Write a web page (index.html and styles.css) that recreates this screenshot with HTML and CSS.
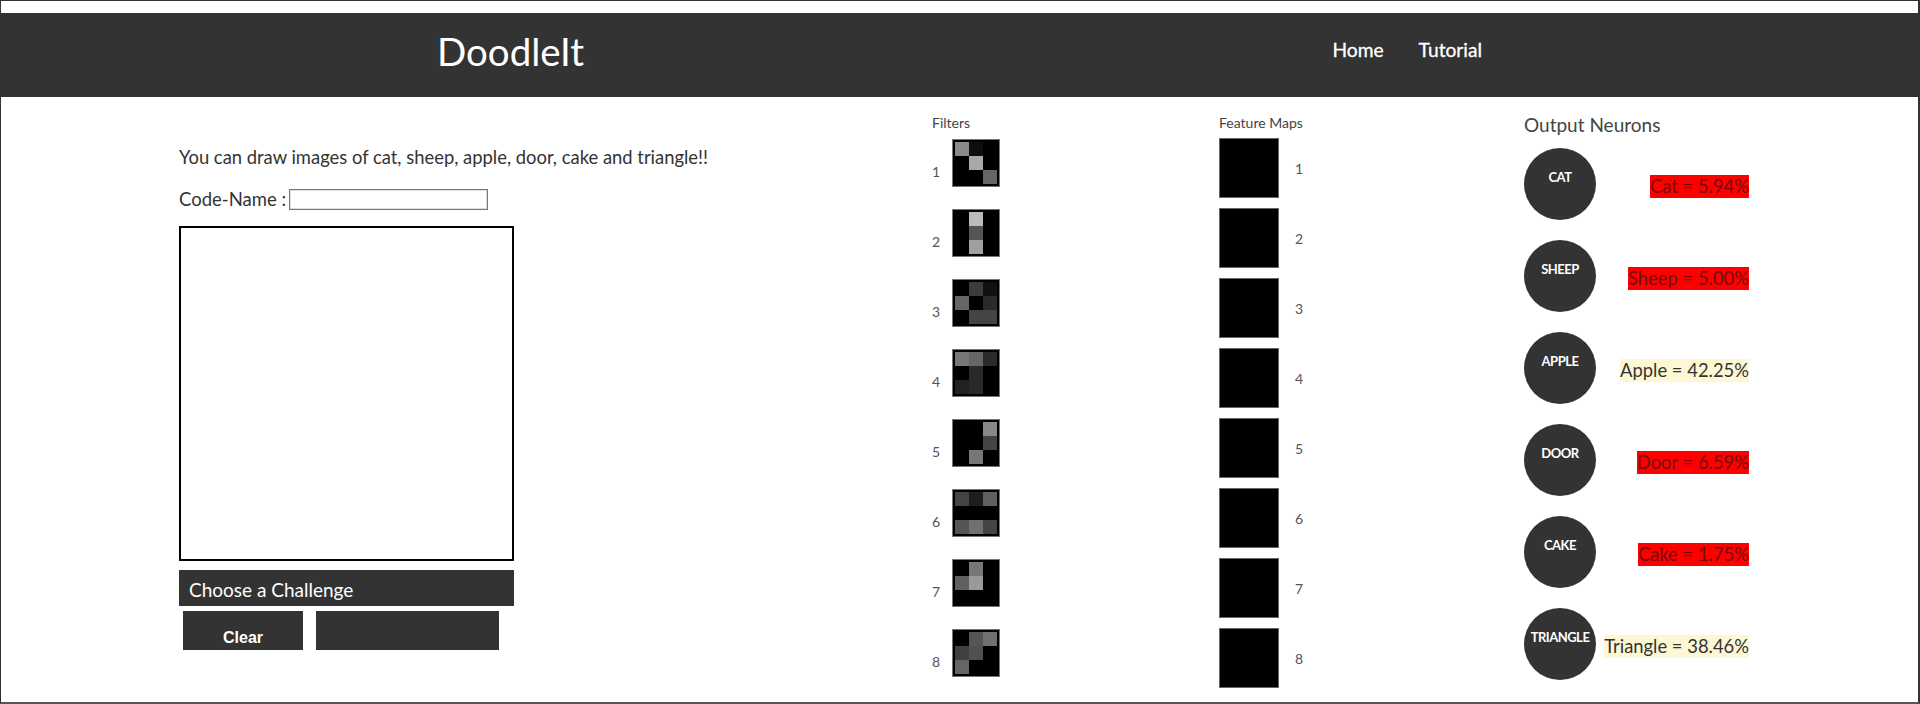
FILE: index.html
```html
<!DOCTYPE html>
<html>
<head>
<meta charset="utf-8">
<title>DoodleIt</title>
<link rel="stylesheet" href="styles.css">
</head>
<body>
<div class="frame">
  <header class="topbar">
    <div class="brand">DoodleIt</div>
    <nav class="nav">
      <a class="nav-link" href="#">Home</a>
      <a class="nav-link" href="#">Tutorial</a>
    </nav>
  </header>
  <main class="main">
    <section class="draw-col">
      <p class="intro">You can draw images of cat, sheep, apple, door, cake and triangle!!</p>
      <div class="codename"><span>Code-Name :</span><input class="codename-input" type="text"></div>
      <div class="canvas"></div>
      <div class="challenge">Choose a Challenge</div>
      <div class="buttons">
        <button class="btn btn-clear">Clear</button>
        <button class="btn btn-wide"></button>
      </div>
    </section>

    <section class="filters-col">
      <div class="col-title">Filters</div>
      <div class="filter-list">
        <div class="filter-row"><span class="num">1</span><div class="filter">
          <i style="background:#8a8a8a"></i><i style="background:#0e0e0e"></i><i></i>
          <i></i><i style="background:#a8a8a8"></i><i></i>
          <i></i><i></i><i style="background:#666"></i></div></div>
        <div class="filter-row"><span class="num">2</span><div class="filter">
          <i></i><i style="background:#bbb"></i><i></i>
          <i></i><i style="background:#555"></i><i></i>
          <i></i><i style="background:#a0a0a0"></i><i></i></div></div>
        <div class="filter-row"><span class="num">3</span><div class="filter">
          <i></i><i style="background:#3c3c3c"></i><i style="background:#111"></i>
          <i style="background:#666"></i><i></i><i style="background:#2a2a2a"></i>
          <i></i><i style="background:#444"></i><i style="background:#444"></i></div></div>
        <div class="filter-row"><span class="num">4</span><div class="filter">
          <i style="background:#777"></i><i style="background:#666"></i><i style="background:#2a2a2a"></i>
          <i></i><i style="background:#2a2a2a"></i><i></i>
          <i style="background:#222"></i><i style="background:#2a2a2a"></i><i></i></div></div>
        <div class="filter-row"><span class="num">5</span><div class="filter">
          <i></i><i></i><i style="background:#888"></i>
          <i></i><i></i><i style="background:#444"></i>
          <i></i><i style="background:#777"></i><i></i></div></div>
        <div class="filter-row"><span class="num">6</span><div class="filter">
          <i style="background:#444"></i><i style="background:#1e1e1e"></i><i style="background:#606060"></i>
          <i></i><i></i><i></i>
          <i style="background:#555"></i><i style="background:#707070"></i><i style="background:#444"></i></div></div>
        <div class="filter-row"><span class="num">7</span><div class="filter">
          <i></i><i style="background:#777"></i><i></i>
          <i style="background:#606060"></i><i style="background:#9a9a9a"></i><i></i>
          <i></i><i></i><i></i></div></div>
        <div class="filter-row"><span class="num">8</span><div class="filter">
          <i></i><i style="background:#555"></i><i style="background:#707070"></i>
          <i style="background:#404040"></i><i style="background:#505050"></i><i></i>
          <i style="background:#666"></i><i></i><i></i></div></div>
      </div>
    </section>

    <section class="maps-col">
      <div class="col-title">Feature Maps</div>
      <div class="map-list">
        <div class="map-row"><div class="map"></div><span class="num">1</span></div>
        <div class="map-row"><div class="map"></div><span class="num">2</span></div>
        <div class="map-row"><div class="map"></div><span class="num">3</span></div>
        <div class="map-row"><div class="map"></div><span class="num">4</span></div>
        <div class="map-row"><div class="map"></div><span class="num">5</span></div>
        <div class="map-row"><div class="map"></div><span class="num">6</span></div>
        <div class="map-row"><div class="map"></div><span class="num">7</span></div>
        <div class="map-row"><div class="map"></div><span class="num">8</span></div>
      </div>
    </section>

    <section class="output-col">
      <div class="out-title">Output Neurons</div>
      <div class="neuron-list">
        <div class="neuron-row"><div class="neuron">CAT</div><span class="prob low">Cat = 5.94%</span></div>
        <div class="neuron-row"><div class="neuron">SHEEP</div><span class="prob low">Sheep = 5.00%</span></div>
        <div class="neuron-row"><div class="neuron">APPLE</div><span class="prob high">Apple = 42.25%</span></div>
        <div class="neuron-row"><div class="neuron">DOOR</div><span class="prob low">Door = 6.59%</span></div>
        <div class="neuron-row"><div class="neuron">CAKE</div><span class="prob low">Cake = 1.75%</span></div>
        <div class="neuron-row"><div class="neuron">TRIANGLE</div><span class="prob high">Triangle = 38.46%</span></div>
      </div>
    </section>
  </main>
</div>
</body>
</html>
```

FILE: styles.css
```css
* { box-sizing: border-box; }
html, body { margin: 0; padding: 0; background: #fff; }
body {
  font-family: Lato, "Liberation Sans", sans-serif;
  color: #333;
}
.frame {
  width: 1920px;
  height: 704px;
  border-top: 1px solid #333;
  border-left: 1px solid #333;
  border-right: 2px solid #333;
  border-bottom: 2px solid #555;
  overflow: hidden;
}
.topbar {
  margin-top: 12px;
  margin-left: -1px;
  height: 84px;
  background: #333;
  display: flex;
  align-items: flex-start;
  justify-content: space-between;
  padding: 0 436px 0 437px;
}
.brand {
  color: #fff;
  font-size: 38.5px;
  line-height: 46px;
  padding-top: 15px;
}
.nav {
  display: flex;
  gap: 35px;
  padding-top: 25px;
}
.nav-link {
  color: #fff;
  text-decoration: none;
  font-size: 19.2px;
  font-weight: 400;
  line-height: 24px;
  -webkit-text-stroke: 0.3px #fff;
}
.main {
  display: grid;
  grid-template-columns: 753px 287px 305px 240px;
  padding-left: 178px;
}
.draw-col {
  display: flex;
  flex-direction: column;
  align-items: flex-start;
  padding-top: 48px;
}
.intro {
  margin: 0;
  font-size: 18.4px;
  line-height: 24px;
}
.codename {
  margin-top: 18px;
  height: 24px;
  display: flex;
  align-items: center;
  font-size: 18.5px;
  line-height: 24px;
}
.codename-input {
  width: 199px;
  height: 21px;
  margin: 0 0 0 3px;
  padding: 0;
  border: 1px solid #777;
  box-shadow: inset 0 0 0 1px #ddd;
  background: #fff;
}
.canvas {
  margin-top: 15px;
  width: 335px;
  height: 335px;
  border: 2px solid #000;
  background: #fff;
}
.challenge {
  margin-top: 9px;
  width: 335px;
  height: 36px;
  background: #333;
  color: #fff;
  font-size: 19px;
  line-height: 36px;
  padding: 2px 0 0 10px;
}
.buttons {
  margin-top: 5px;
  padding-left: 4px;
  display: flex;
  gap: 13px;
}
.btn {
  height: 39px;
  border: none;
  background: #333;
  color: #fff;
  font-family: "Liberation Sans", Arial, sans-serif;
  font-weight: 700;
  font-size: 16px;
  padding: 14px 0 0;
  line-height: 20px;
}
.btn-clear { width: 120px; }
.btn-wide { width: 183px; }

.col-title {
  font-size: 14px;
  line-height: 17px;
  color: #444;
  padding-top: 17px;
}
.num {
  font-size: 14px;
  line-height: 17px;
  color: #555;
}
.filter-list {
  margin-top: 8px;
  display: flex;
  flex-direction: column;
  gap: 22px;
}
.filter-row {
  display: flex;
  align-items: flex-start;
}
.filter-row .num {
  width: 20px;
  padding-top: 24px;
  line-height: 17px;
}
.filter {
  width: 48px;
  height: 48px;
  background: #000;
  border: 1px solid #777;
  padding: 2px;
  display: grid;
  grid-template-columns: repeat(3, 1fr);
  grid-template-rows: repeat(3, 1fr);
}
.filter i { display: block; background: #000; }

.map-list {
  margin-top: 7px;
  display: flex;
  flex-direction: column;
  gap: 10px;
}
.map-row {
  display: flex;
  align-items: center;
  gap: 16px;
}
.map {
  width: 60px;
  height: 60px;
  background: #000;
  border: 1px solid #666;
}

.out-title {
  font-size: 19px;
  line-height: 23px;
  color: #444;
  padding-top: 16px;
}
.neuron-list {
  margin-top: 12px;
  width: 225px;
  display: flex;
  flex-direction: column;
  gap: 20px;
}
.neuron-row {
  display: flex;
  align-items: center;
  justify-content: space-between;
}
.neuron {
  flex: none;
  width: 72px;
  height: 72px;
  border-radius: 50%;
  background: #333;
  color: #fff;
  font-size: 13px;
  font-weight: 700;
  letter-spacing: -0.5px;
  line-height: 14px;
  text-align: center;
  padding-top: 22px;
}
.prob {
  white-space: nowrap;
  font-size: 18.4px;
  line-height: 23px;
  margin-top: 5px;
}
.prob.low { background: #ff0000; color: #720c0c; }
.prob.high { background: #fdf8d3; color: #333; }
```
